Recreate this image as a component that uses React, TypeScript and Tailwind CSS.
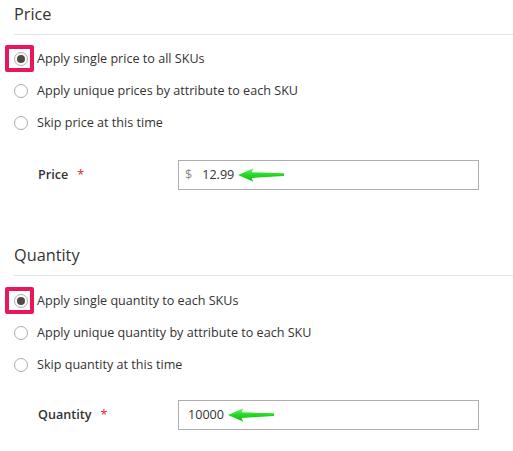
import React from "react";

const Arrow = () => (
  <svg width="46" height="14" viewBox="0 0 46 14" className="ml-[4px] shrink-0">
    <defs>
      <linearGradient id="ag" x1="0" y1="0" x2="0" y2="1">
        <stop offset="0" stopColor="#6af56a" />
        <stop offset="0.5" stopColor="#22d822" />
        <stop offset="1" stopColor="#16b816" />
      </linearGradient>
    </defs>
    <path
      d="M0 7 L15.5 0.2 Q13.8 3 13.8 4.3 L46 5.2 L46 8 L13.8 9.9 Q13.8 11.2 15.5 13.8 Z"
      fill="url(#ag)"
    />
  </svg>
);

type RadioProps = { checked?: boolean; highlight?: boolean; label: string };

const Radio = ({ checked, highlight, label }: RadioProps) => (
  <div className="flex h-[32px] items-center">
    <div className="relative ml-[14px] flex h-[14px] w-[14px] items-center justify-center">
      {highlight && (
        <div className="absolute left-[-9px] top-[-7px] h-[27px] w-[29px] rounded-[2px] border-[4px] border-[#e8175d]" />
      )}
      <div className="relative flex h-[14px] w-[14px] items-center justify-center rounded-full border border-[#adadad] bg-white">
        {checked && <div className="h-[8px] w-[8px] rounded-full bg-[#514943]" />}
      </div>
    </div>
    <span className="ml-[9px] text-[12.6px] text-[#333]">{label}</span>
  </div>
);

type SectionProps = {
  title: string;
  options: string[];
  fieldLabel: string;
  prefix?: string;
  value: string;
  second?: boolean;
};

const Section = ({ title, options, fieldLabel, prefix, value, second }: SectionProps) => (
  <div>
    <div className="ml-[14px] border-b border-[#e3e3e3] pb-[8px] pt-[2px] text-[16.3px] leading-[24px] text-[#333]">
      {title}
    </div>
    <div className={second ? "pt-[9px]" : "pt-[8px]"}>
      {options.map((o, i) => (
        <Radio key={o} label={o} checked={i === 0} highlight={i === 0} />
      ))}
    </div>
    <div className={second ? "mt-[19px] flex items-center" : "mt-[21px] flex items-center"}>
      <div className="ml-[38px] flex w-[140px] items-center text-[12.6px] font-semibold text-[#333]">
        {fieldLabel}
        <span className="ml-[9px] font-normal text-[#e22626]">*</span>
      </div>
      <div className="flex h-[30px] w-[301px] items-center border border-[#adadad] bg-white text-[12.6px] text-[#333]">
        {prefix ? (
          <>
            <span className="ml-[6px] text-[#888888]">{prefix}</span>
            <span className="ml-[10px]">{value}</span>
          </>
        ) : (
          <span className="ml-[9px]">{value}</span>
        )}
        <Arrow />
      </div>
    </div>
  </div>
);

export default function App() {
  return (
    <div
      className="h-[451px] w-[513px] overflow-hidden bg-white"
      style={{ fontFamily: '"Open Sans", "Noto Sans", sans-serif' }}
    >
      <Section
        title="Price"
        options={[
          "Apply single price to all SKUs",
          "Apply unique prices by attribute to each SKU",
          "Skip price at this time",
        ]}
        fieldLabel="Price"
        prefix="$"
        value="12.99"
      />
      <div className="h-[51px]" />
      <Section
        title="Quantity"
        options={[
          "Apply single quantity to each SKUs",
          "Apply unique quantity by attribute to each SKU",
          "Skip quantity at this time",
        ]}
        fieldLabel="Quantity"
        value="10000"
        second
      />
    </div>
  );
}
